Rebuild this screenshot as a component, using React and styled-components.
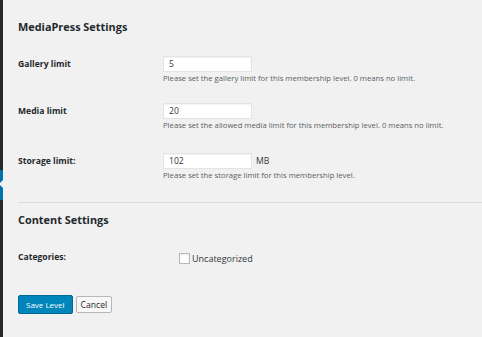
import React from "react";
import styled, { createGlobalStyle } from "styled-components";

const GlobalStyle = createGlobalStyle`
  html, body {
    margin: 0;
    padding: 0;
    background: #f1f1f1;
  }
  body {
    font-family: "Open Sans", "Noto Sans", sans-serif;
    color: #23282d;
  }
`;

const Page = styled.div`
  display: flex;
  width: 482px;
  height: 337px;
  overflow: hidden;
  background: #f1f1f1;
`;

const AdminMenu = styled.div`
  width: 3px;
  flex: none;
  background: #23282d;
  display: flex;
  flex-direction: column;
`;

const ActiveItem = styled.div`
  position: relative;
  margin-top: 170px;
  height: 30px;
  background: #0073aa;

  &::after {
    content: "";
    position: absolute;
    right: 0;
    top: 10px;
    border: 4px solid transparent;
    border-right-color: #f1f1f1;
    border-left-width: 0;
  }
`;

const Main = styled.div`
  flex: 1;
  padding: 0 0 0 15px;
`;

const SectionTitle = styled.h2`
  margin: ${(p) => p.$top}px 0 0;
  font-size: 10.9px;
  line-height: 14px;
  font-weight: 700;
  color: #23282d;
`;

const FieldRow = styled.div`
  display: grid;
  grid-template-columns: 145px 1fr;
  margin-top: ${(p) => p.$top}px;
`;

const Label = styled.div`
  font-size: 8.6px;
  font-weight: 700;
  line-height: 12px;
  padding-top: ${(p) => p.$pad || 2}px;
`;

const Field = styled.div`
  display: flex;
  flex-direction: column;
`;

const InputLine = styled.div`
  display: flex;
  align-items: center;
  gap: 4px;
`;

const TextInput = styled.input`
  box-sizing: border-box;
  width: 89px;
  height: 16px;
  margin: 0;
  padding: 0 5px;
  border: 1px solid #e4e4e4;
  background: #fff;
  box-shadow: inset 0 1px 1px rgba(0, 0, 0, 0.05);
  font-family: inherit;
  font-size: 8.6px;
  color: #32373c;
  outline: none;
`;

const Unit = styled.span`
  font-size: 8.6px;
  color: #32373c;
`;

const Help = styled.p`
  margin: 1px 0 0;
  font-size: 7.7px;
  line-height: 11px;
  color: #5a5f63;
`;

const Divider = styled.hr`
  margin: 0;
  margin-top: ${(p) => p.$top}px;
  border: 0;
  border-top: 1px solid #dcdcdc;
`;

const CheckLabel = styled.label`
  display: flex;
  align-items: center;
  gap: 2px;
  margin: 2px 0 0 16px;
  font-size: 9px;
  color: #32373c;
`;

const CheckBox = styled.span`
  box-sizing: border-box;
  width: 11px;
  height: 11px;
  border: 1px solid #b4b9be;
  background: #fff;
  box-shadow: inset 0 1px 2px rgba(0, 0, 0, 0.08);
`;

const Actions = styled.div`
  display: flex;
  align-items: center;
  gap: 3px;
  margin-top: 30px;
`;

const Button = styled.button`
  box-sizing: border-box;
  height: ${(p) => (p.$primary ? 19 : 17)}px;
  padding: 0 ${(p) => (p.$primary ? 7 : 4)}px;
  border: 1px solid ${(p) => (p.$primary ? "#006799" : "#b7b7b7")};
  border-radius: 2px;
  background: ${(p) => (p.$primary ? "#0085ba" : "#f7f7f7")};
  color: ${(p) => (p.$primary ? "#ffffff" : "#23282d")};
  font-family: inherit;
  font-size: ${(p) => (p.$primary ? 8 : 8.6)}px;
  cursor: pointer;
`;

const limits = [
  {
    label: "Gallery limit",
    value: "5",
    help: "Please set the gallery limit for this membership level. 0 means no limit.",
    top: 22,
  },
  {
    label: "Media limit",
    value: "20",
    help: "Please set the allowed media limit for this membership level. 0 means no limit.",
    top: 19,
  },
  {
    label: "Storage limit:",
    value: "102",
    unit: "MB",
    help: "Please set the storage limit for this membership level.",
    top: 22,
  },
];

const App = () => {
  return (
    <Page>
      <GlobalStyle />
      <AdminMenu>
        <ActiveItem />
      </AdminMenu>
      <Main>
        <SectionTitle $top={20}>MediaPress Settings</SectionTitle>
        {limits.map((item) => (
          <FieldRow key={item.label} $top={item.top}>
            <Label>{item.label}</Label>
            <Field>
              <InputLine>
                <TextInput defaultValue={item.value} />
                {item.unit && <Unit>{item.unit}</Unit>}
              </InputLine>
              <Help>{item.help}</Help>
            </Field>
          </FieldRow>
        ))}
        <Divider $top={21} />
        <SectionTitle $top={10}>Content Settings</SectionTitle>
        <FieldRow $top={23}>
          <Label $pad={1}>Categories:</Label>
          <Field>
            <CheckLabel>
              <CheckBox />
              Uncategorized
            </CheckLabel>
          </Field>
        </FieldRow>
        <Actions>
          <Button $primary>Save Level</Button>
          <Button>Cancel</Button>
        </Actions>
      </Main>
    </Page>
  );
};

export default App;
